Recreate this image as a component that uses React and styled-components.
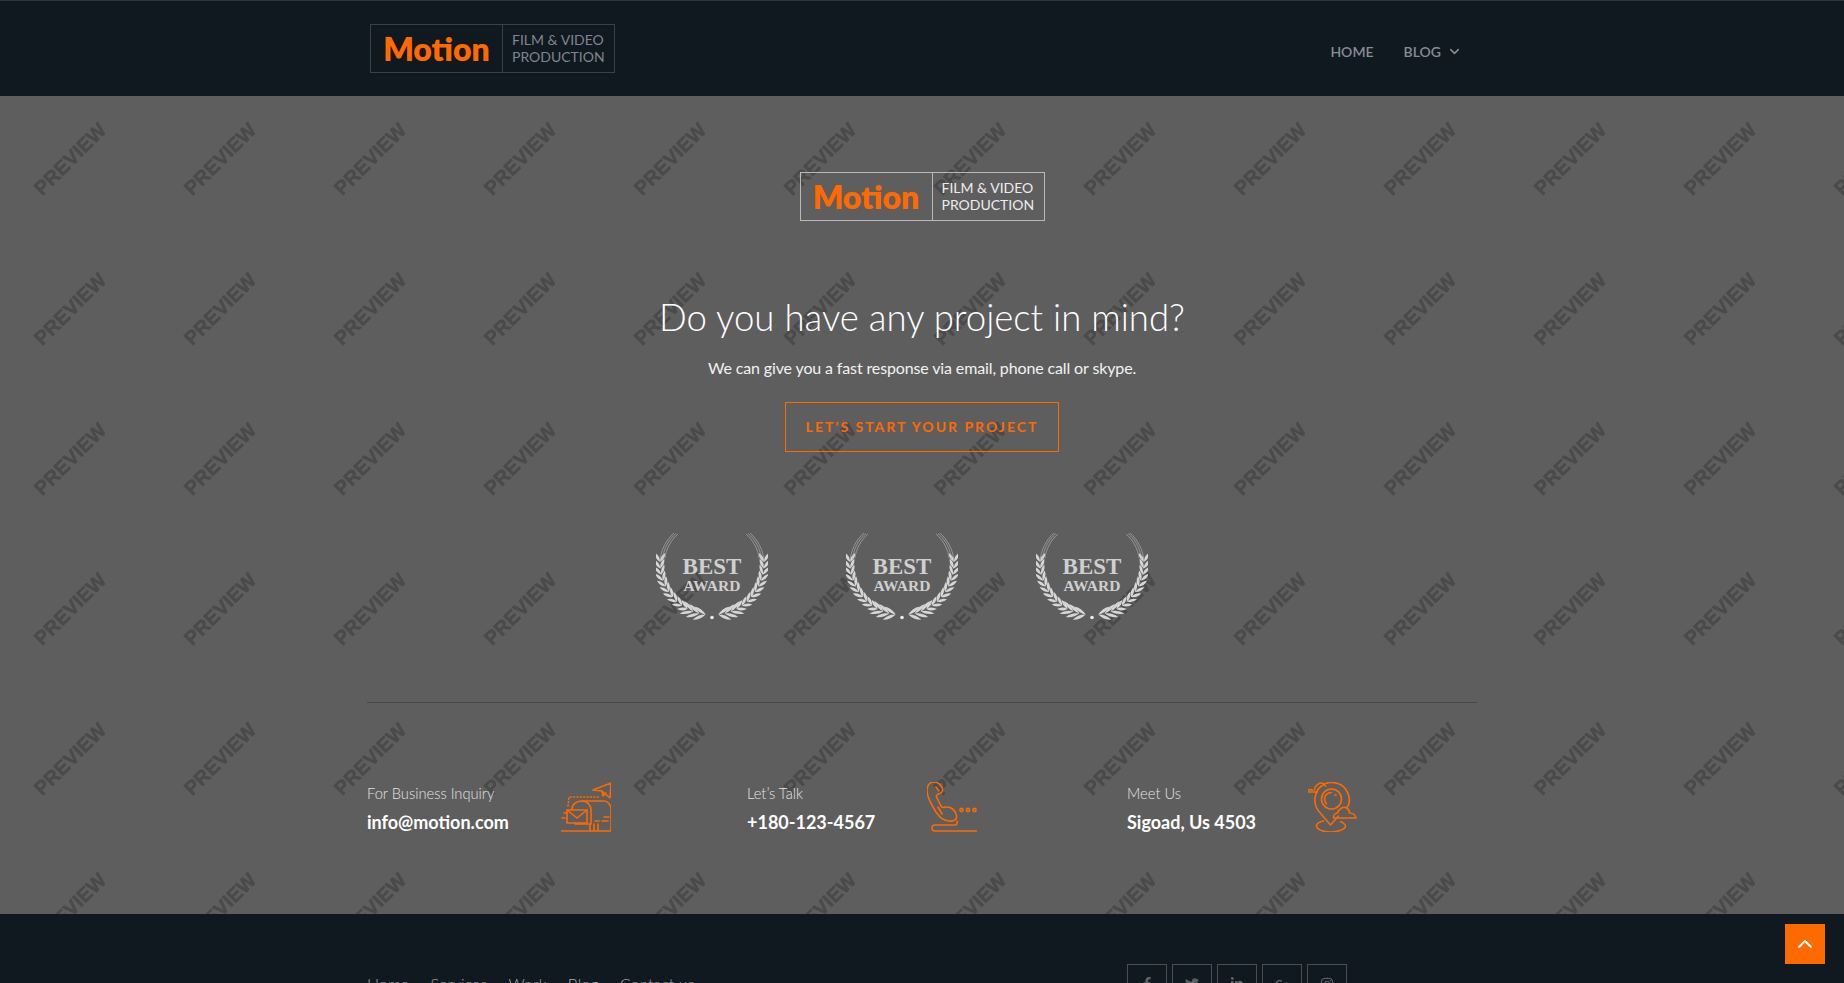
import React from "react";
import styled, { createGlobalStyle } from "styled-components";
import { FaFacebookF, FaTwitter, FaLinkedinIn, FaGooglePlusG, FaInstagram } from "react-icons/fa";
import { FiChevronDown, FiChevronUp } from "react-icons/fi";

const ORANGE = "#ff6a00";
const DARK = "#101820";

const Global = createGlobalStyle`
  html, body { margin: 0; padding: 0; height: 100%; overflow: hidden; background: ${DARK}; }
  body { font-family: Lato, "Open Sans", sans-serif; }
  * { box-sizing: border-box; }
`;

const Header = styled.header`
  height: 96px;
  background: ${DARK};
  border-top: 1px solid #2f353b;
`;
const Container = styled.div`
  width: 1110px;
  margin: 0 auto;
`;
const HeaderRow = styled(Container)`
  height: 100%;
  display: flex;
  justify-content: space-between;
  padding: 23px 15px 0 3px;
`;
const LogoBox = styled.a`
  display: inline-flex;
  height: 49px;
  width: 245px;
  border: 1px solid ${p => (p.$light ? "#b9b9b9" : "#3a4048")};
`;
const LogoName = styled.span`
  width: 132px;
  flex: none;
  border-right: 1px solid ${p => (p.$light ? "#b9b9b9" : "#3a4048")};
  color: ${ORANGE};
  font-size: 32px;
  font-weight: 800;
  line-height: 47px;
  text-align: center;
`;
const LogoTag = styled.span`
  padding: 7px 0 0 9px;
  font-size: 14px;
  line-height: 16.5px;
  white-space: nowrap;
  color: ${p => (p.$light ? "#ececec" : "#80858d")};
`;
const Nav = styled.nav`
  display: flex;
  gap: 30px;
  padding-top: 17px;
  font-size: 14px;
  font-weight: 600;
  color: #878c94;
`;
const NavItem = styled.a`
  display: flex;
  align-items: center;
  gap: 6px;
  height: 20px;
`;

const Hero = styled.section`
  position: relative;
  height: 818px;
  background: #5e5e5e;
  overflow: hidden;
`;
const Watermark = styled.svg`
  position: absolute;
  inset: 0;
  width: 100%;
  height: 100%;
`;
const HeroInner = styled(Container)`
  position: relative;
  display: flex;
  flex-direction: column;
  align-items: center;
  padding-top: 76px;
`;
const Title = styled.h2`
  margin: 70px 0 0;
  font-size: 36.6px;
  line-height: 52px;
  font-weight: 300;
  color: #fff;
`;
const Lead = styled.p`
  margin: 13px 0 0;
  font-size: 16px;
  letter-spacing: -0.13px;
  line-height: 24px;
  color: #f2f2f2;
`;
const CTA = styled.a`
  margin-top: 22px;
  width: 274px;
  height: 50px;
  border: 1px solid ${ORANGE};
  color: ${ORANGE};
  font-size: 14px;
  font-weight: 700;
  letter-spacing: 2px;
  line-height: 48px;
  text-align: center;
`;
const Awards = styled.div`
  display: flex;
  gap: 78px;
  margin: 81px 0 0 -41px;
`;
const Rule = styled.hr`
  width: 100%;
  margin: 81px 0 0;
  border: 0;
  border-top: 1px solid #474747;
`;
const Contacts = styled.div`
  width: 100%;
  display: grid;
  grid-template-columns: repeat(3, 380px);
  padding-top: 76px;
`;
const Contact = styled.div`
  display: flex;
  gap: 52px;
  align-items: flex-start;
`;
const ContactText = styled.div`
  padding-top: 3px;
`;
const ContactLabel = styled.div`
  font-size: 14.7px;
  line-height: 22px;
  font-weight: 300;
  color: #e2e2e2;
`;
const ContactValue = styled.div`
  margin-top: 5px;
  font-size: 18px;
  line-height: 26px;
  font-weight: 700;
  color: #fff;
`;
const IconSvg = styled.svg`
  width: 50px;
  height: 50px;
  flex: none;
  margin-top: 3px;
  fill: none;
  stroke: ${ORANGE};
  stroke-width: 1.6;
  stroke-linecap: round;
  stroke-linejoin: round;
`;

const Footer = styled.footer`
  background: ${DARK};
  height: 240px;
`;
const FooterRow = styled(Container)`
  display: grid;
  grid-template-columns: 760px 350px;
  padding-top: 50px;
`;
const FooterLinks = styled.div`
  display: flex;
  gap: 21.5px;
  padding-top: 8px;
  font-size: 16px;
  line-height: 24px;
  font-weight: 300;
  color: #a4a7ab;
`;
const Socials = styled.div`
  display: flex;
  gap: 5px;
`;
const Social = styled.a`
  width: 40px;
  height: 40px;
  border: 1px solid #4a4e53;
  color: #5d6167;
  display: flex;
  align-items: center;
  justify-content: center;
  font-size: 14px;
`;
const ToTop = styled.a`
  position: fixed;
  right: 19px;
  bottom: 19px;
  width: 40px;
  height: 40px;
  background: ${ORANGE};
  color: #fff;
  display: flex;
  align-items: center;
  justify-content: center;
  font-size: 24px;
`;

const Logo = ({ light }) => (
  <LogoBox $light={light}>
    <LogoName $light={light}>Motion</LogoName>
    <LogoTag $light={light}>
      FILM &amp; VIDEO
      <br />
      PRODUCTION
    </LogoTag>
  </LogoBox>
);

const Branch = () => {
  const cx = 56, cy = 30, r = 52;
  const pairs = Array.from({ length: 13 }, (_, i) => {
    const a = ((97 + i * 7) * Math.PI) / 180;
    const x = cx + r * Math.cos(a);
    const y = cy + r * Math.sin(a);
    const t = a + Math.PI / 2;
    const len = i < 3 ? 14 : 10.5;
    const leaf = (off, w) => {
      const d = t + off;
      const tx = x + len * Math.cos(d), ty = y + len * Math.sin(d);
      const mx = x + (len / 2) * Math.cos(d), my = y + (len / 2) * Math.sin(d);
      const nx = -Math.sin(d) * w, ny = Math.cos(d) * w;
      return `M${x.toFixed(1)} ${y.toFixed(1)}Q${(mx + nx).toFixed(1)} ${(my + ny).toFixed(1)} ${tx.toFixed(1)} ${ty.toFixed(1)}Q${(mx - nx).toFixed(1)} ${(my - ny).toFixed(1)} ${x.toFixed(1)} ${y.toFixed(1)}Z`;
    };
    return <path key={i} d={leaf(0.5, 3) + leaf(-0.5, 3)} />;
  });
  return (
    <g fill="#d6d6d6">
      {pairs}
      <g fill="none" stroke="#b8b8b8" strokeWidth="0.6">
        <path d="M4 28C5 17 10 7 18 0" />
        <path d="M6.5 26C7.5 17 12 7 20 0.5" />
        <path d="M9 25C10 16 15 7 22 1" />
      </g>
    </g>
  );
};

const Wreath = () => (
  <svg width="112" height="88" viewBox="0 0 112 88">
    <Branch />
    <g transform="translate(112 0) scale(-1 1)">
      <Branch />
    </g>
    <circle cx="56" cy="84.5" r="1.8" fill="#ececec" />
    <text x="56" y="41" textAnchor="middle" fontFamily="Liberation Serif, serif" fontWeight="700" fontSize="23" fill="#cfcfcf">BEST</text>
    <text x="56" y="57.5" textAnchor="middle" fontFamily="Liberation Serif, serif" fontWeight="700" fontSize="15.5" fill="#cfcfcf">AWARD</text>
  </svg>
);

const MailIcon = () => (
  <IconSvg viewBox="0 0 50 50">
    <path d="M32 8L50 1L49 16L41 9ZM41 9L42 14L45 11" />
    <path d="M7 24L8 15H38" strokeDasharray="1 2.4" />
    <path d="M11 27C11 22 16 19 21 19H43C47 19 50 23 50 28V49" />
    <path d="M21 19C27 19 30 24 30 28V42H14V41" />
    <rect x="6" y="28" width="20" height="13" />
    <path d="M6 28L16 36L26 28" />
    <path d="M0 49H50M29 42V49M33 42V49M37 42V49M1 36H4M3 31H6M41 39H47M43 35H48M34 39H38" />
  </IconSvg>
);
const PhoneIcon = () => (
  <IconSvg viewBox="0 0 50 50">
    <path d="M7 0C2 0 0 4 0 9C0 14 4 22 9 30C12 34 14 38 22 39C28 40 31 36 29 32C28 28 24 25 20 25C17 25 16 27 14 24L10 16C8 13 11 12 14 11C16 10 16 8 15 5C13 2 10 0 7 0Z" />
    <path d="M9 5L12 9M11 25L15 32" />
    <circle cx="34.5" cy="28" r="1.6" />
    <circle cx="41" cy="28" r="1.6" />
    <circle cx="47.5" cy="28" r="1.6" />
    <path d="M30 39V41C30 42 29 43 28 43H8C4 43 4 49 8 49H50M18 43H20" />
  </IconSvg>
);
const PinIcon = () => (
  <IconSvg viewBox="1.5 0 50 50">
    <path d="M24 43L12 29C6 21 8 9 15 4C22 -2 34 0 39 7C44 14 44 22 40 26M32 34L24 43" />
    <circle cx="25" cy="17" r="10" />
    <path d="M25 10.5C21 10.5 18 13.5 18 17C18 19 19 21 20 22" />
    <circle cx="29" cy="13" r="0.4" />
    <path d="M17 39C12 40 10 42 10 44C10 47 16 50 24 50C32 50 39 47 39 44C39 42 37 41 34 39.5" />
    <path d="M27 36C27 33 29 31 31 31C32 27 37 24 40 26C42 27 43 29 43 31C46 31 49 33 49.5 36Z" />
    <path d="M8 8C8 4 12 1 15 1C17 1 18 3 19 4M0 10C1 8 3 7 6 8M0 10H11" />
  </IconSvg>
);

const contacts = [
  { label: "For Business Inquiry", value: "info@motion.com", Icon: MailIcon },
  { label: "Let’s Talk", value: "+180-123-4567", Icon: PhoneIcon },
  { label: "Meet Us", value: "Sigoad, Us 4503", Icon: PinIcon },
];

export default function App() {
  return (
    <>
      <Global />
      <Header>
        <HeaderRow>
          <Logo />
          <Nav>
            <NavItem>HOME</NavItem>
            <NavItem>
              BLOG <FiChevronDown size={15} strokeWidth={2.5} />
            </NavItem>
          </Nav>
        </HeaderRow>
      </Header>
      <Hero>
        <Watermark aria-hidden="true">
          <defs>
            <pattern id="wm" width="150" height="150" patternUnits="userSpaceOnUse" patternTransform="translate(-5 -12)">
              <text x="75" y="82" textAnchor="middle" transform="rotate(-45 75 75)" fontFamily="Liberation Sans, sans-serif" fontWeight="700" fontSize="20" fill="rgba(0,0,0,0.2)" stroke="rgba(0,0,0,0.2)" strokeWidth="0.4">PREVIEW</text>
            </pattern>
          </defs>
          <rect width="100%" height="100%" fill="url(#wm)" />
        </Watermark>
        <HeroInner>
          <Logo light />
          <Title>Do you have any project in mind?</Title>
          <Lead>We can give you a fast response via email, phone call or skype.</Lead>
          <CTA>LET’S START YOUR PROJECT</CTA>
          <Awards>
            <Wreath />
            <Wreath />
            <Wreath />
          </Awards>
          <Rule />
          <Contacts>
            {contacts.map(({ label, value, Icon }) => (
              <Contact key={label}>
                <ContactText>
                  <ContactLabel>{label}</ContactLabel>
                  <ContactValue>{value}</ContactValue>
                </ContactText>
                <Icon />
              </Contact>
            ))}
          </Contacts>
        </HeroInner>
      </Hero>
      <Footer>
        <FooterRow>
          <FooterLinks>
            <a>Home</a>
            <a>Services</a>
            <a>Work</a>
            <a>Blog</a>
            <a>Contact us</a>
          </FooterLinks>
          <Socials>
            <Social><FaFacebookF /></Social>
            <Social><FaTwitter /></Social>
            <Social><FaLinkedinIn /></Social>
            <Social><FaGooglePlusG /></Social>
            <Social><FaInstagram /></Social>
          </Socials>
        </FooterRow>
      </Footer>
      <ToTop><FiChevronUp strokeWidth={2} /></ToTop>
    </>
  );
}
